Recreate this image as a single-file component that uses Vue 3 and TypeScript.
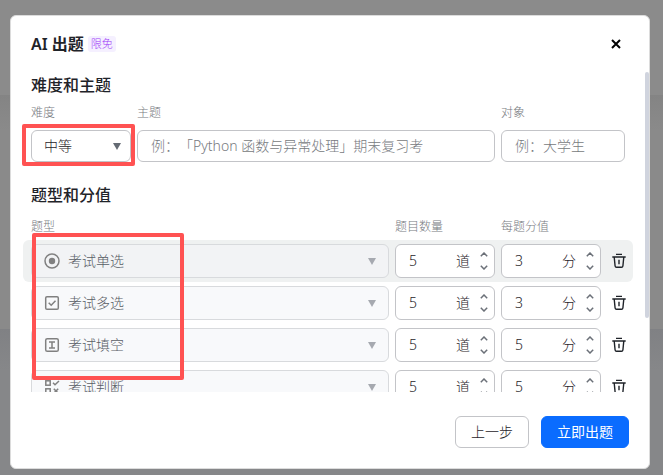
<script setup lang="ts">
import { computed, onMounted, ref } from 'vue'

type IconName = 'radio' | 'check' | 'blank' | 'judge'

interface QuestionRow {
  id: string
  label: string
  icon: IconName
  count: number
  score: number
}

const difficulty = ref('中等')
const topic = ref('')
const audience = ref('')

const rows = ref<QuestionRow[]>([
  { id: 'single', label: '考试单选', icon: 'radio', count: 5, score: 3 },
  { id: 'multiple', label: '考试多选', icon: 'check', count: 5, score: 3 },
  { id: 'blank', label: '考试填空', icon: 'blank', count: 5, score: 5 },
  { id: 'judge', label: '考试判断', icon: 'judge', count: 5, score: 5 },
])
const activeId = ref('single')

function step(row: QuestionRow, key: 'count' | 'score', delta: number) {
  row[key] = Math.max(1, row[key] + delta)
}

function removeRow(id: string) {
  rows.value = rows.value.filter((row) => row.id !== id)
}

const scroller = ref<HTMLElement | null>(null)
const view = ref({ top: 0, visible: 1, total: 1 })

function measure() {
  const el = scroller.value
  if (el) view.value = { top: el.scrollTop, visible: el.clientHeight, total: el.scrollHeight }
}
onMounted(measure)

const thumbStyle = computed(() => ({
  top: `${Math.round((view.value.top / view.value.total) * 100)}%`,
  height: `${Math.round((view.value.visible / view.value.total) * 100)}%`,
}))
</script>

<template>
  <div class="mask">
    <section class="dialog" role="dialog" aria-labelledby="dialog-title">
      <header class="head">
        <h1 id="dialog-title" class="title">AI 出题</h1>
        <span class="badge">限免</span>
        <button class="close" type="button">
          <svg width="10" height="10" viewBox="0 0 10 10"><path d="M1 1l8 8M9 1L1 9" /></svg>
        </button>
      </header>

      <div class="main">
        <div ref="scroller" class="scroller" @scroll="measure">
          <h2 class="section">难度和主题</h2>
          <div class="fields">
            <div class="field">
              <label class="label" for="difficulty">难度</label>
              <div class="picker">
                <select id="difficulty" v-model="difficulty" class="control">
                  <option>中等</option>
                </select>
                <svg class="caret" width="8" height="7" viewBox="0 0 8 7"><path d="M0 0h8L4 7z" /></svg>
                <span class="mark mark-small"></span>
              </div>
            </div>
            <div class="field">
              <label class="label" for="topic">主题</label>
              <input id="topic" v-model="topic" class="control" type="text" placeholder="例：「Python 函数与异常处理」期末复习考" />
            </div>
            <div class="field">
              <label class="label" for="audience">对象</label>
              <input id="audience" v-model="audience" class="control" type="text" placeholder="例：大学生" />
            </div>
          </div>

          <h2 class="section second">题型和分值</h2>
          <div class="row columns">
            <label class="label" for="type-single">题型</label>
            <label class="label" for="count-single">题目数量</label>
            <label class="label" for="score-single">每题分值</label>
          </div>
          <div v-for="row in rows" :key="row.id" class="row" :class="{ active: row.id === activeId }" @mouseenter="activeId = row.id">
            <div class="picker">
              <svg class="type-icon" width="16" height="16" viewBox="0 0 16 16">
                <template v-if="row.icon === 'radio'">
                  <circle cx="8" cy="8" r="7" />
                  <circle class="solid" cx="8" cy="8" r="3.2" />
                </template>
                <template v-else-if="row.icon === 'check'">
                  <rect x="1.7" y="1.7" width="12.6" height="12.6" rx="1.3" />
                  <path d="M4.7 7.8l2.5 2.5 4.3-4.5" />
                </template>
                <template v-else-if="row.icon === 'blank'">
                  <rect x="1.7" y="1.7" width="12.6" height="12.6" rx="1.6" />
                  <path d="M5 4.9h6M8 4.9v6.2M5 11.1h6" />
                </template>
                <template v-else>
                  <rect x="1.8" y="1.8" width="4.4" height="4.4" />
                  <rect x="1.8" y="9.8" width="4.4" height="4.4" />
                  <path d="M9 3.8l2 2 4-3.8M9.8 9.8l4.4 4.4M14.2 9.8l-4.4 4.4" />
                </template>
              </svg>
              <select :id="`type-${row.id}`" class="control tall typed" disabled>
                <option>{{ row.label }}</option>
              </select>
              <svg class="caret faded" width="8" height="7" viewBox="0 0 8 7"><path d="M0 0h8L4 7z" /></svg>
            </div>
            <div v-for="key in (['count', 'score'] as const)" :key="key" class="number control tall">
              <input :id="`${key}-${row.id}`" v-model.number="row[key]" class="value" type="text" inputmode="numeric" />
              <label class="unit" :for="`${key}-${row.id}`">{{ key === 'count' ? '道' : '分' }}</label>
              <span class="steps">
                <button type="button" @click="step(row, key, 1)">
                  <svg width="8" height="5" viewBox="0 0 8 5"><path d="M.8 4.2L4 1l3.2 3.2" /></svg>
                </button>
                <button type="button" @click="step(row, key, -1)">
                  <svg width="8" height="5" viewBox="0 0 8 5"><path d="M.8.8L4 4 7.2.8" /></svg>
                </button>
              </span>
            </div>
            <button class="trash" type="button" @click="removeRow(row.id)">
              <svg width="16" height="16" viewBox="0 0 16 16">
                <path d="M5 1.4h6M1.3 4h13.4M3.2 4l.9 9c.1.8.6 1.3 1.4 1.3h5c.8 0 1.3-.5 1.4-1.3l.9-9M8 6.8v4.4" />
              </svg>
            </button>
          </div>
        </div>
        <div class="track"><div class="thumb" :style="thumbStyle"></div></div>
      </div>

      <footer class="foot">
        <button class="btn" type="button">上一步</button>
        <button class="btn primary" type="button">立即出题</button>
      </footer>
      <span class="mark mark-large"></span>
    </section>
  </div>
</template>

<style>
body {
  margin: 0;
}
</style>

<style scoped>
* {
  box-sizing: border-box;
}
.mask {
  display: flex;
  height: 100vh;
  padding: 15px 13px 6px 10px;
  font-family: "Noto Sans", "Noto Sans CJK SC", sans-serif;
  font-size: 14px;
  font-weight: 300;
  text-spacing-trim: space-all;
  color: #1f2329;
  background: linear-gradient(#8b8b8b 0 95px, #848484 95px, #8a8a8a 130px, #8a8a8a 329px, #808184 329px, #868789 370px);
}
button,
input,
select {
  margin: 0;
  font: inherit;
  color: inherit;
  text-spacing-trim: inherit;
}
button {
  padding: 0;
  border: 0;
  background: none;
  cursor: pointer;
}
svg {
  display: block;
  fill: none;
}
.dialog {
  position: relative;
  display: flex;
  flex: 1;
  flex-direction: column;
  min-width: 0;
  border: 1px solid #dcdcdc;
  border-radius: 6px;
  background: #fff;
}
.head {
  display: flex;
  flex: none;
  align-items: center;
  height: 56px;
  padding: 0 28px 0 20px;
}
.title {
  margin: 0;
  font-size: 16px;
  font-weight: 600;
  line-height: 24px;
}
.badge {
  margin-left: 4px;
  padding: 0 3px;
  border-radius: 3px;
  font-size: 11px;
  font-weight: 300;
  line-height: 16px;
  color: #a03cf7;
  background: #f5f0ff;
}
.close {
  margin-left: auto;
}
.close svg {
  stroke: #000;
  stroke-width: 2;
}
.main {
  position: relative;
  flex: 1;
  min-height: 0;
}
.scroller {
  height: 100%;
  padding: 0 16px 80px 12px;
  overflow-y: auto;
  scrollbar-width: none;
}
.track {
  position: absolute;
  top: 0;
  right: 0;
  bottom: 0;
  width: 4px;
}
.thumb {
  position: absolute;
  width: 100%;
  border-radius: 2px;
  background: #d0d4de;
}
.section {
  margin: 0;
  padding-left: 8px;
  font-size: 16px;
  font-weight: 500;
  line-height: 26px;
}
.second {
  margin-top: 20px;
}
.fields {
  display: grid;
  grid-template-columns: 100px 1fr 124px;
  gap: 6px;
  padding: 5px 8px 0;
}
.field {
  display: grid;
  gap: 7px;
}
.label {
  font-size: 12px;
  line-height: 20px;
  color: #777a80;
}
.picker {
  position: relative;
  display: flex;
  align-items: center;
}
.control {
  width: 100%;
  min-width: 0;
  height: 32px;
  padding: 0 13px 2px;
  border: 1px solid #c3c4c8;
  border-radius: 6px;
  outline: 0;
  background: #fff;
  appearance: none;
}
select.control {
  padding-left: 12px;
}
.control::placeholder {
  color: #777a80;
  opacity: 1;
}
.tall {
  height: 34px;
}
select.typed {
  padding-left: 36px;
  border-color: #d8dadd;
  color: #585d66;
  background: #f8f9fb;
  opacity: 1;
}
.caret {
  position: absolute;
  right: 10px;
  fill: #646a73;
  pointer-events: none;
}
.faded {
  right: 13px;
  fill: #a6a9b0;
}
.type-icon {
  position: absolute;
  left: 13px;
  stroke: #808080;
  stroke-width: 1.5;
}
.solid {
  fill: #808080;
  stroke: none;
}
.row {
  display: grid;
  grid-template-columns: 1fr 100px 100px 24px;
  gap: 6px;
  align-items: center;
  padding: 4px 2px 4px 8px;
  border-radius: 6px;
}
.columns {
  padding-top: 9px;
  padding-bottom: 3px;
}
.active {
  background: #eff1f1;
}
.active select.typed {
  background: #f2f3f5;
}
.number {
  display: flex;
  align-items: center;
  padding: 0 6px 0 13px;
}
.value {
  flex: 1;
  min-width: 0;
  width: 100%;
  padding: 0 0 2px;
  border: 0;
  outline: 0;
  background: none;
}
.unit {
  padding-bottom: 2px;
}
.steps {
  display: grid;
  gap: 8px;
  margin-left: 10px;
}
.steps svg {
  stroke: #6b7078;
  stroke-width: 1.5;
}
.trash {
  display: grid;
  place-items: center;
  height: 24px;
}
.trash svg {
  stroke: #1f2329;
  stroke-width: 1.4;
}
.foot {
  display: flex;
  flex: none;
  justify-content: flex-end;
  gap: 12px;
  padding: 24px 20px 20px;
}
.btn {
  height: 32px;
  padding: 0 15px 2px;
  border: 1px solid #c3c4c8;
  border-radius: 6px;
  background: #fff;
}
.primary {
  border-color: #0a6cff;
  font-weight: 400;
  color: #fff;
  background: #0a6cff;
}
.mark {
  position: absolute;
  border: 4px solid #ff5252;
  border-radius: 2px;
  pointer-events: none;
}
.mark-small {
  inset: -6px -4px -4px -9px;
}
.mark-large {
  top: 217px;
  left: 21px;
  width: 152px;
  height: 147px;
}
</style>
